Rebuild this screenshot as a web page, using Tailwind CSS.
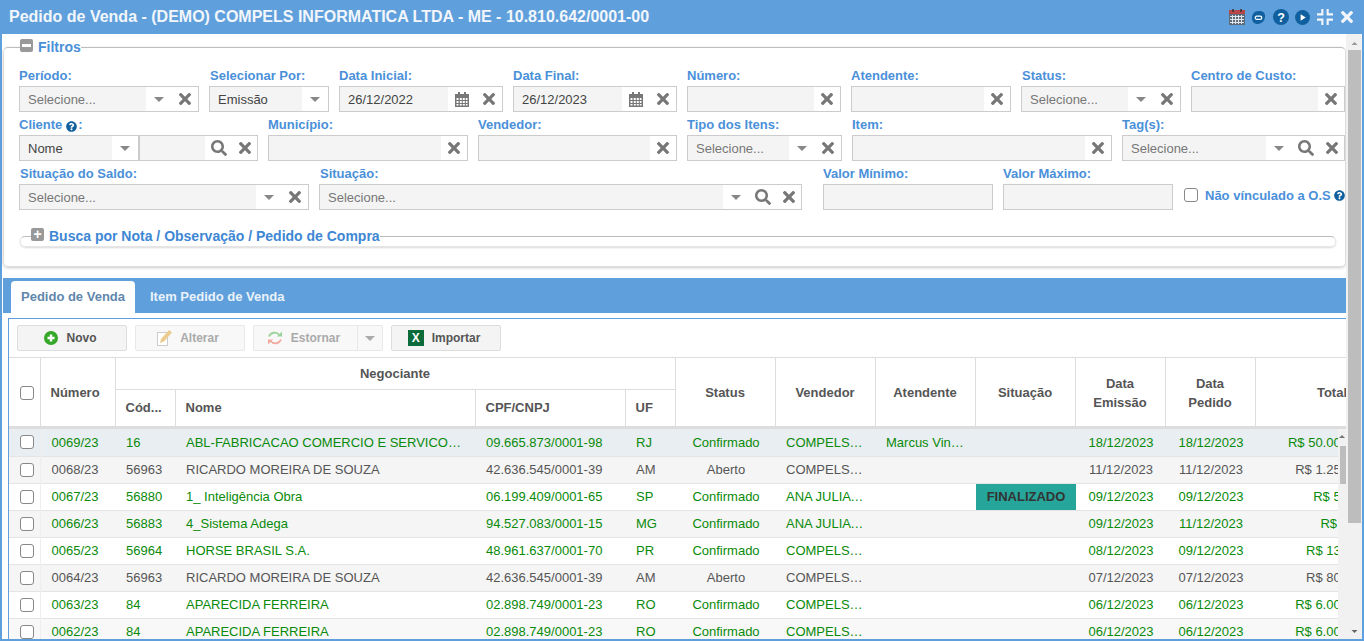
<!DOCTYPE html>
<html lang="pt-BR">
<head>
    <meta charset="UTF-8">
    <title>Pedido de Venda</title>
    <script src="https://cdn.jsdelivr.net/npm/@tailwindcss/browser@4"></script>
</head>
<body class="h-[641px] w-[1364px] overflow-hidden bg-white font-['Liberation_Sans',Arial,sans-serif] text-[13px] text-[#555]">
    <svg class="hidden">
        <symbol id="x" viewBox="0 0 352 512"><path fill="currentColor" d="M242.72 256l100.07-100.07c12.28-12.28 12.28-32.19 0-44.48l-22.24-22.24c-12.28-12.28-32.19-12.28-44.48 0L176 189.28 75.93 89.21c-12.28-12.28-32.19-12.28-44.48 0L9.21 111.45c-12.28 12.28-12.28 32.19 0 44.48L109.28 256 9.21 356.07c-12.28 12.28-12.28 32.19 0 44.48l22.24 22.24c12.28 12.28 32.2 12.28 44.48 0L176 322.72l100.07 100.07c12.28 12.28 32.2 12.28 44.48 0l22.24-22.24c12.28-12.28 12.28-32.19 0-44.48L242.72 256z"/></symbol>
        <symbol id="lupa" viewBox="0 0 512 512"><path fill="currentColor" d="M505 442.7L405.3 343c-4.5-4.5-10.6-7-17-7H372c27.6-35.3 44-79.7 44-128C416 93.1 322.9 0 208 0S0 93.1 0 208s93.1 208 208 208c48.3 0 92.7-16.4 128-44v16.3c0 6.4 2.5 12.5 7 17l99.7 99.7c9.4 9.4 24.6 9.4 33.9 0l28.3-28.3c9.4-9.4 9.4-24.6.1-34zM208 336c-70.7 0-128-57.2-128-128 0-70.7 57.2-128 128-128 70.7 0 128 57.2 128 128 0 70.7-57.2 128-128 128z"/></symbol>
        <symbol id="seta" viewBox="0 0 10 5"><path fill="currentColor" d="M0 0h10L5 5z"/></symbol>
        <symbol id="cal" viewBox="0 0 14 15"><path fill="currentColor" d="M3 0h2v2h4V0h2v2h3v13H0V2h3zM1.500 6v2h2V6zm3.300 0v2h2V6zm3 0v2h2V6zm3 0v2h1.700V6zM1.500 9v2h2V9zm3.300 0v2h2V9zm3 0v2h2V9zm3 0v2h1.700V9zM1.500 12v1.500h2V12zm3.300 0v1.500h2V12zm3 0v1.500h2V12zm3 0v1.500h1.700V12z"/></symbol>
        <symbol id="ajuda" viewBox="0 0 512 512"><path fill="currentColor" d="M504 256c0 136.997-111.043 248-248 248S8 392.997 8 256C8 119.083 119.043 8 256 8s248 111.083 248 248zM262.655 90c-54.497 0-89.255 22.957-116.549 63.758-3.536 5.286-2.353 12.415 2.715 16.258l34.699 26.31c5.205 3.947 12.621 3.008 16.665-2.122 17.864-22.658 30.113-35.797 57.303-35.797 20.429 0 45.698 13.148 45.698 32.958 0 14.976-12.363 22.667-32.534 33.976C247.128 238.528 216 254.941 216 296v4c0 6.627 5.373 12 12 12h56c6.627 0 12-5.373 12-12v-1.333c0-28.462 83.186-29.647 83.186-106.667 0-58.002-60.165-102-116.531-102zM256 338c-25.365 0-46 20.635-46 46 0 25.364 20.635 46 46 46s46-20.636 46-46c0-25.365-20.635-46-46-46z"/></symbol>
    </svg>

    <div class="flex h-full flex-col border-x-2 border-b-2 border-[#5fa0dc]">
        <!-- Title bar -->
        <div class="-mx-[2px] flex h-[34px] shrink-0 items-center justify-between bg-[#5fa0dc] pl-[9px] pr-[11px]">
            <h1 class="text-[16px] font-bold text-[#f2f6fb]">Pedido de Venda - (DEMO) COMPELS INFORMATICA LTDA - ME - 10.810.642/0001-00</h1>
            <div class="flex items-center">
                <svg class="h-[16px] w-[16px]" viewBox="0 0 16 16"><rect y="1" width="16" height="15" fill="#5c6b7a"/><rect y="1" width="16" height="4" fill="#b9474a"/><path stroke="#dfe5ea" stroke-width="1" d="M1 7.500h14M1 10.500h14M1 13.500h14M3.500 6v9M6.500 6v9M9.500 6v9M12.500 6v9"/><path stroke="#333" stroke-width="1.500" d="M4 0v3M12 0v3"/></svg>
                <svg class="ml-[6px] h-[15px] w-[15px]" viewBox="0 0 16 16"><path fill="#10609f" d="M8 1c5 0 7 2 7 5.500C15 11 12 15 7 15c-4 0-6-3-6-6.500C1 4 4 1 8 1z"/><rect x="4.500" y="6.500" width="7" height="3.500" rx="1.700" fill="none" stroke="#fff" stroke-width="1.300"/></svg>
                <svg class="ml-[7px] h-[16px] w-[16px] text-[#10609f]" viewBox="0 0 16 16"><circle cx="8" cy="8" r="8" fill="currentColor"/><text x="8" y="12.500" text-anchor="middle" fill="#fff" font-size="12.500" font-weight="700" font-family="Liberation Sans">?</text></svg>
                <svg class="ml-[6px] h-[15px] w-[15px]" viewBox="0 0 16 16"><circle cx="8" cy="8" r="8" fill="#10609f"/><path fill="#fff" d="M6 4.500l5.500 3.500L6 11.500z"/></svg>
                <svg class="ml-[7px] h-[16px] w-[16px]" viewBox="0 0 15 15"><path fill="#f2f6fb" d="M4 0h2v6H0V4h4zM9 0h2v4h4v2H9zM0 9h6v6H4v-4H0zM9 9h6v2h-4v4H9z"/></svg>
                <svg class="ml-[8px] h-[18px] w-[12px] text-[#f2f6fb]"><use href="#x"/></svg>
            </div>
        </div>

        <div class="flex min-h-0 flex-1">
            <div class="flex w-[1344px] min-w-0 flex-col pl-px">
                <!-- Filters -->
                <fieldset class="mt-[5px] h-[228px] w-[1343px] shrink-0 rounded-[5px] border border-[#dcdcdc] border-t-[#bdbdbd] pl-[15px] pr-0 shadow-[0_1px_3px_rgba(0,0,0,0.2)]">
                    <legend class="ml-[1px] flex h-[16px] items-center pr-0 text-[14px] font-bold leading-none text-[#4a90d9]">
                        <span class="flex h-[13px] w-[13px] -translate-y-[2px] items-center justify-center rounded-[2px] bg-[#999]"><span class="h-[3px] w-[9px] bg-white"></span></span>
                        <span class="ml-[5px]">Filtros</span>
                    </legend>

                    <div class="mt-[8px] flex gap-[10px]">
                        <div class="w-[180px]">
                            <label class="flex h-[23px] items-end pb-[1px] text-[13px] font-bold text-[#4a90d9]">Período:</label>
                            <div class="flex h-[26px] border border-[#ccc]">
                                <div class="flex flex-1 items-center bg-[#f4f4f4] pl-2 pt-px text-[#777]">Selecione...</div>
                                <div class="flex w-[26px] items-center justify-center"><svg class="h-[5px] w-[10px] text-[#888]"><use href="#seta"/></svg></div>
                                <div class="flex w-[26px] items-center justify-center"><svg class="h-[18px] w-[12px] text-[#777]"><use href="#x"/></svg></div>
                            </div>
                        </div>
                        <div class="w-[120px]">
                            <label class="flex h-[23px] items-end pb-[1px] pl-px text-[13px] font-bold text-[#4a90d9]">Selecionar Por:</label>
                            <div class="flex h-[26px] border border-[#ccc]">
                                <div class="flex flex-1 items-center bg-[#f4f4f4] pl-2 pt-px text-[#444]">Emissão</div>
                                <div class="flex w-[26px] items-center justify-center"><svg class="h-[5px] w-[10px] text-[#888]"><use href="#seta"/></svg></div>
                            </div>
                        </div>
                        <div class="w-[164px]">
                            <label class="flex h-[23px] items-end pb-[1px] text-[13px] font-bold text-[#4a90d9]">Data Inicial:</label>
                            <div class="flex h-[26px] border border-[#ccc]">
                                <div class="flex flex-1 items-center bg-[#f4f4f4] pl-2 pt-px text-[#444]">26/12/2022</div>
                                <div class="flex w-[28px] items-center justify-center"><svg class="h-[15px] w-[14px] text-[#777]"><use href="#cal"/></svg></div>
                                <div class="flex w-[26px] items-center justify-center"><svg class="h-[18px] w-[12px] text-[#777]"><use href="#x"/></svg></div>
                            </div>
                        </div>
                        <div class="w-[164px]">
                            <label class="flex h-[23px] items-end pb-[1px] text-[13px] font-bold text-[#4a90d9]">Data Final:</label>
                            <div class="flex h-[26px] border border-[#ccc]">
                                <div class="flex flex-1 items-center bg-[#f4f4f4] pl-2 pt-px text-[#444]">26/12/2023</div>
                                <div class="flex w-[28px] items-center justify-center"><svg class="h-[15px] w-[14px] text-[#777]"><use href="#cal"/></svg></div>
                                <div class="flex w-[26px] items-center justify-center"><svg class="h-[18px] w-[12px] text-[#777]"><use href="#x"/></svg></div>
                            </div>
                        </div>
                        <div class="w-[154px]">
                            <label class="flex h-[23px] items-end pb-[1px] text-[13px] font-bold text-[#4a90d9]">Número:</label>
                            <div class="flex h-[26px] border border-[#ccc]">
                                <div class="flex-1 bg-[#f4f4f4]"></div>
                                <div class="flex w-[26px] items-center justify-center"><svg class="h-[18px] w-[12px] text-[#777]"><use href="#x"/></svg></div>
                            </div>
                        </div>
                        <div class="w-[160px]">
                            <label class="flex h-[23px] items-end pb-[1px] text-[13px] font-bold text-[#4a90d9]">Atendente:</label>
                            <div class="flex h-[26px] border border-[#ccc]">
                                <div class="flex-1 bg-[#f4f4f4]"></div>
                                <div class="flex w-[26px] items-center justify-center"><svg class="h-[18px] w-[12px] text-[#777]"><use href="#x"/></svg></div>
                            </div>
                        </div>
                        <div class="w-[160px]">
                            <label class="flex h-[23px] items-end pb-[1px] pl-px text-[13px] font-bold text-[#4a90d9]">Status:</label>
                            <div class="flex h-[26px] border border-[#ccc]">
                                <div class="flex flex-1 items-center bg-[#f4f4f4] pl-2 pt-px text-[#777]">Selecione...</div>
                                <div class="flex w-[26px] items-center justify-center"><svg class="h-[5px] w-[10px] text-[#888]"><use href="#seta"/></svg></div>
                                <div class="flex w-[26px] items-center justify-center"><svg class="h-[18px] w-[12px] text-[#777]"><use href="#x"/></svg></div>
                            </div>
                        </div>
                        <div class="w-[154px]">
                            <label class="flex h-[23px] items-end pb-[1px] text-[13px] font-bold text-[#4a90d9]">Centro de Custo:</label>
                            <div class="flex h-[26px] border border-[#ccc]">
                                <div class="flex-1 bg-[#f4f4f4]"></div>
                                <div class="flex w-[26px] items-center justify-center"><svg class="h-[18px] w-[12px] text-[#777]"><use href="#x"/></svg></div>
                            </div>
                        </div>
                    </div>

                    <div class="flex gap-[10px]">
                        <div class="w-[239px]">
                            <label class="flex h-[23px] items-end pb-[1px] text-[13px] font-bold text-[#4a90d9]">Cliente<svg class="mb-[2px] ml-[4px] mr-px h-[11px] w-[11px] text-[#10609f]"><use href="#ajuda"/></svg>:</label>
                            <div class="flex h-[26px] border border-[#ccc]">
                                <div class="flex w-[120px] items-center border-r-2 border-[#ccc] bg-[#f4f4f4] pl-2 text-[#444]"><span class="flex-1 pt-px">Nome</span><span class="flex h-full w-[26px] items-center justify-center bg-white"><svg class="h-[5px] w-[10px] text-[#888]"><use href="#seta"/></svg></span></div>
                                <div class="flex-1 bg-[#f4f4f4]"></div>
                                <div class="flex w-[27px] items-center justify-center"><svg class="h-[16px] w-[16px] text-[#777]"><use href="#lupa"/></svg></div>
                                <div class="flex w-[25px] items-center justify-center"><svg class="h-[18px] w-[12px] text-[#777]"><use href="#x"/></svg></div>
                            </div>
                        </div>
                        <div class="w-[200px]">
                            <label class="flex h-[23px] items-end pb-[1px] text-[13px] font-bold text-[#4a90d9]">Município:</label>
                            <div class="flex h-[26px] border border-[#ccc]">
                                <div class="flex-1 bg-[#f4f4f4]"></div>
                                <div class="flex w-[26px] items-center justify-center"><svg class="h-[18px] w-[12px] text-[#777]"><use href="#x"/></svg></div>
                            </div>
                        </div>
                        <div class="w-[199px]">
                            <label class="flex h-[23px] items-end pb-[1px] text-[13px] font-bold text-[#4a90d9]">Vendedor:</label>
                            <div class="flex h-[26px] border border-[#ccc]">
                                <div class="flex-1 bg-[#f4f4f4]"></div>
                                <div class="flex w-[26px] items-center justify-center"><svg class="h-[18px] w-[12px] text-[#777]"><use href="#x"/></svg></div>
                            </div>
                        </div>
                        <div class="w-[155px]">
                            <label class="flex h-[23px] items-end pb-[1px] text-[13px] font-bold text-[#4a90d9]">Tipo dos Itens:</label>
                            <div class="flex h-[26px] border border-[#ccc]">
                                <div class="flex flex-1 items-center bg-[#f4f4f4] pl-2 pt-px text-[#777]">Selecione...</div>
                                <div class="flex w-[26px] items-center justify-center"><svg class="h-[5px] w-[10px] text-[#888]"><use href="#seta"/></svg></div>
                                <div class="flex w-[26px] items-center justify-center"><svg class="h-[18px] w-[12px] text-[#777]"><use href="#x"/></svg></div>
                            </div>
                        </div>
                        <div class="w-[260px]">
                            <label class="flex h-[23px] items-end pb-[1px] text-[13px] font-bold text-[#4a90d9]">Item:</label>
                            <div class="flex h-[26px] border border-[#ccc]">
                                <div class="flex-1 bg-[#f4f4f4]"></div>
                                <div class="flex w-[26px] items-center justify-center"><svg class="h-[18px] w-[12px] text-[#777]"><use href="#x"/></svg></div>
                            </div>
                        </div>
                        <div class="w-[223px]">
                            <label class="flex h-[23px] items-end pb-[1px] text-[13px] font-bold text-[#4a90d9]">Tag(s):</label>
                            <div class="flex h-[26px] border border-[#ccc]">
                                <div class="flex flex-1 items-center bg-[#f4f4f4] pl-2 pt-px text-[#777]">Selecione...</div>
                                <div class="flex w-[26px] items-center justify-center"><svg class="h-[5px] w-[10px] text-[#888]"><use href="#seta"/></svg></div>
                                <div class="flex w-[27px] items-center justify-center"><svg class="h-[16px] w-[16px] text-[#777]"><use href="#lupa"/></svg></div>
                                <div class="flex w-[25px] items-center justify-center"><svg class="h-[18px] w-[12px] text-[#777]"><use href="#x"/></svg></div>
                            </div>
                        </div>
                    </div>

                    <div class="flex gap-[10px]">
                        <div class="w-[290px]">
                            <label class="flex h-[23px] items-end pb-[1px] pl-px text-[13px] font-bold text-[#4a90d9]">Situação do Saldo:</label>
                            <div class="flex h-[26px] border border-[#ccc]">
                                <div class="flex flex-1 items-center bg-[#f4f4f4] pl-2 pt-px text-[#777]">Selecione...</div>
                                <div class="flex w-[26px] items-center justify-center"><svg class="h-[5px] w-[10px] text-[#888]"><use href="#seta"/></svg></div>
                                <div class="flex w-[26px] items-center justify-center"><svg class="h-[18px] w-[12px] text-[#777]"><use href="#x"/></svg></div>
                            </div>
                        </div>
                        <div class="w-[483px]">
                            <label class="flex h-[23px] items-end pb-[1px] pl-px text-[13px] font-bold text-[#4a90d9]">Situação:</label>
                            <div class="flex h-[26px] border border-[#ccc]">
                                <div class="flex flex-1 items-center bg-[#f4f4f4] pl-2 pt-px text-[#777]">Selecione...</div>
                                <div class="flex w-[26px] items-center justify-center"><svg class="h-[5px] w-[10px] text-[#888]"><use href="#seta"/></svg></div>
                                <div class="flex w-[27px] items-center justify-center"><svg class="h-[16px] w-[16px] text-[#777]"><use href="#lupa"/></svg></div>
                                <div class="flex w-[25px] items-center justify-center"><svg class="h-[18px] w-[12px] text-[#777]"><use href="#x"/></svg></div>
                            </div>
                        </div>
                        <div class="ml-[11px] w-[170px]">
                            <label class="flex h-[23px] items-end pb-[1px] text-[13px] font-bold text-[#4a90d9]">Valor Mínimo:</label>
                            <div class="h-[26px] border border-[#ccc] bg-[#f4f4f4]"></div>
                        </div>
                        <div class="w-[170px]">
                            <label class="flex h-[23px] items-end pb-[1px] text-[13px] font-bold text-[#4a90d9]">Valor Máximo:</label>
                            <div class="h-[26px] border border-[#ccc] bg-[#f4f4f4]"></div>
                        </div>
                        <div class="ml-[1px] flex items-center self-end pb-[5px] text-[13px] font-bold text-[#4a90d9]">
                            <input type="checkbox" class="h-[14px] w-[14px] appearance-none rounded-[3px] border border-[#888] bg-white">
                            <span class="ml-[7px]">Não vínculado a O.S</span>
                            <svg class="ml-[3px] h-[11px] w-[11px] text-[#10609f]"><use href="#ajuda"/></svg>
                        </div>
                    </div>

                    <fieldset class="ml-px mt-[18px] h-[19px] w-[1316px] rounded-[5px] border border-[#e6e6e6] border-t-[#bdbdbd] pl-[10px] shadow-[0_1px_2px_rgba(0,0,0,0.15)]">
                        <legend class="flex h-[16px] items-center text-[14px] font-bold leading-none text-[#3d87d4]">
                            <span class="flex h-[13px] w-[13px] -translate-y-[2px] items-center justify-center rounded-[2px] bg-[#999] text-[14px] leading-none text-white">+</span>
                            <span class="ml-[5px]">Busca por Nota / Observação / Pedido de Compra</span>
                        </legend>
                    </fieldset>
                </fieldset>

                <!-- Tabs -->
                <div class="mt-[11px] flex h-[35px] w-[1343px] shrink-0 items-end bg-[#5fa0dc] pl-[8px] text-[13px] font-bold">
                    <div class="flex h-[32px] w-[124px] items-center justify-center rounded-t-[4px] bg-white text-[#5f87ad]">Pedido de Venda</div>
                    <div class="flex h-[32px] items-center pl-[15px] text-[#eaf2fa]">Item Pedido de Venda</div>
                </div>

                <!-- Grid panel -->
                <div class="ml-[5px] mt-[5px] flex min-h-0 w-[1338px] flex-1 flex-col overflow-hidden border-l border-t border-[#5fa0dc]">
                    <div class="flex h-[39px] shrink-0 items-start gap-[8px] border-b border-[#ddd] pl-[8px] pt-[6px] text-[12px] font-bold">
                        <div class="flex h-[26px] w-[110px] items-center justify-center rounded-[2px] border border-[#ddd] bg-[#f4f4f4] pr-[4px] text-[#555]">
                            <svg class="mr-[9px] h-[14px] w-[14px]" viewBox="0 0 14 14"><circle cx="7" cy="7" r="7" fill="#35a829"/><path fill="#fff" d="M5.800 3.500h2.400v2.300h2.300v2.400H8.200v2.300H5.800V8.200H3.500V5.800h2.300z"/></svg>
                            Novo
                        </div>
                        <div class="flex h-[26px] w-[110px] items-center justify-center rounded-[2px] border border-[#e8e8e8] bg-[#f8f8f8] pr-[5px] text-[#aaa]">
                            <svg class="mr-[8px] h-[16px] w-[16px]" viewBox="0 0 16 16"><rect x="1.500" y="2.500" width="10" height="13" fill="#fff" stroke="#ccc"/><path fill="#eccb8e" d="M13 0l3 2.500-8 9-4 1.500 1-4z"/></svg>
                            Alterar
                        </div>
                        <div class="flex h-[26px] w-[130px] items-center rounded-[2px] border border-[#e8e8e8] bg-[#f8f8f8] text-[#aaa]">
                            <span class="flex flex-1 items-center justify-center pr-[4px]">
                                <svg class="mr-[8px] h-[16px] w-[16px]" viewBox="0 0 16 16" fill="none" stroke-width="1.800"><path stroke="#9bd39b" d="M2 6.500C3.500 2.500 9 1 12.500 5"/><path fill="#9bd39b" d="M15 1.500v5h-5z"/><path stroke="#f2a9a0" d="M14 9.500C12.500 13.500 7 15 3.500 11"/><path fill="#f2a9a0" d="M1 14.500v-5h5z"/></svg>
                                Estornar
                            </span>
                            <span class="flex h-full w-[25px] items-center justify-center border-l border-[#e8e8e8]"><svg class="h-[5px] w-[10px] text-[#aaa]"><use href="#seta"/></svg></span>
                        </div>
                        <div class="flex h-[26px] w-[110px] items-center justify-center rounded-[2px] border border-[#ddd] bg-[#f4f4f4] pr-[4px] text-[#555]">
                            <span class="mr-[8px] flex h-[16px] w-[16px] items-center justify-center bg-[#0b6b3a] text-[12px] font-bold leading-none text-white">X</span>
                            Importar
                        </div>
                    </div>

                    <!-- Header -->
                    <div class="h-[71px] shrink-0 overflow-hidden">
                        <table class="w-[1346px] table-fixed border-collapse font-bold text-[#555]">
                            <colgroup><col class="w-[31px]"><col class="w-[75px]"><col class="w-[60px]"><col class="w-[300px]"><col class="w-[150px]"><col class="w-[50px]"><col class="w-[100px]"><col class="w-[100px]"><col class="w-[100px]"><col class="w-[100px]"><col class="w-[90px]"><col class="w-[90px]"><col class="w-[100px]"></colgroup>
                            <thead class="border-b-[3px] border-[#ddd]">
                                <tr class="h-[31px]">
                                    <th rowspan="2" class="border-r border-[#ddd]"><input type="checkbox" class="block h-[14px] w-[14px] translate-x-[11px] translate-y-px appearance-none rounded-[3px] border border-[#888] bg-white"></th>
                                    <th rowspan="2" class="border-r border-[#ddd] pl-[10px] pt-[2px] text-left">Número</th>
                                    <th colspan="4" class="border-b border-r border-[#ddd] pt-px text-center">Negociante</th>
                                    <th rowspan="2" class="border-r border-[#ddd] pt-[2px] text-center">Status</th>
                                    <th rowspan="2" class="border-r border-[#ddd] pt-[2px] text-center">Vendedor</th>
                                    <th rowspan="2" class="border-r border-[#ddd] pt-[2px] text-center">Atendente</th>
                                    <th rowspan="2" class="border-r border-[#ddd] pt-[2px] text-center">Situação</th>
                                    <th rowspan="2" class="border-r border-[#ddd] pt-[2px] text-center leading-[19px]">Data<br>Emissão</th>
                                    <th rowspan="2" class="border-r border-[#ddd] pt-[2px] text-center leading-[19px]">Data<br>Pedido</th>
                                    <th rowspan="2" class="pr-[8px] pt-[2px] text-right">Total</th>
                                </tr>
                                <tr class="h-[38px]">
                                    <th class="truncate border-r border-[#ddd] pl-[10px] text-left font-bold">Cód...</th>
                                    <th class="border-r border-[#ddd] pl-[10px] text-left">Nome</th>
                                    <th class="border-r border-[#ddd] pl-[10px] text-left">CPF/CNPJ</th>
                                    <th class="border-r border-[#ddd] pl-[10px] text-left">UF</th>
                                </tr>
                            </thead>
                        </table>
                    </div>

                    <!-- Rows -->
                    <div class="relative min-h-0 flex-1 overflow-hidden">
                        <table class="w-[1367px] table-fixed border-collapse">
                            <colgroup><col class="w-[31px]"><col class="w-[76px]"><col class="w-[60px]"><col class="w-[300px]"><col class="w-[150px]"><col class="w-[50px]"><col class="w-[100px]"><col class="w-[100px]"><col class="w-[100px]"><col class="w-[100px]"><col class="w-[90px]"><col class="w-[90px]"><col class="w-[120px]"></colgroup>
                            <tbody>
                                <tr class="h-[27px] border-b border-[#e4e4e4] bg-[#e9eef2] text-[#0a8a0a]">
                                    <td class="border-r border-[#eee] pl-[11px]"><input type="checkbox" class="block h-[14px] w-[14px] appearance-none rounded-[3px] border border-[#888] bg-white"></td>
                                    <td class="pl-[11px]">0069/23</td><td class="pl-[10px]">16</td><td class="truncate px-[10px]">ABL-FABRICACAO COMERCIO E SERVICOS LTDA</td><td class="pl-[10px]">09.665.873/0001-98</td><td class="pl-[10px]">RJ</td><td class="text-center">Confirmado</td><td class="truncate px-[10px]">COMPELS INFORMATICA</td><td class="truncate px-[10px]">Marcus Vinicius Silva</td><td></td><td class="text-center">18/12/2023</td><td class="text-center">18/12/2023</td><td class="pr-[10px] text-right">R$ 50.000,00</td>
                                </tr>
                                <tr class="h-[27px] border-b border-[#e4e4e4] bg-[#f5f5f5] text-[#555]">
                                    <td class="border-r border-[#eee] pl-[11px]"><input type="checkbox" class="block h-[14px] w-[14px] appearance-none rounded-[3px] border border-[#888] bg-white"></td>
                                    <td class="pl-[11px]">0068/23</td><td class="pl-[10px]">56963</td><td class="truncate px-[10px]">RICARDO MOREIRA DE SOUZA</td><td class="pl-[10px]">42.636.545/0001-39</td><td class="pl-[10px]">AM</td><td class="text-center">Aberto</td><td class="truncate px-[10px]">COMPELS INFORMATICA</td><td></td><td></td><td class="text-center">11/12/2023</td><td class="text-center">11/12/2023</td><td class="pr-[10px] text-right">R$ 1.250,00</td>
                                </tr>
                                <tr class="h-[27px] border-b border-[#e4e4e4] bg-white text-[#0a8a0a]">
                                    <td class="border-r border-[#eee] pl-[11px]"><input type="checkbox" class="block h-[14px] w-[14px] appearance-none rounded-[3px] border border-[#888] bg-white"></td>
                                    <td class="pl-[11px]">0067/23</td><td class="pl-[10px]">56880</td><td class="truncate px-[10px]">1_ Inteligência Obra</td><td class="pl-[10px]">06.199.409/0001-65</td><td class="pl-[10px]">SP</td><td class="text-center">Confirmado</td><td class="truncate px-[10px]">ANA JULIA FERREIRA</td><td></td><td class="bg-[#26a69a] text-center font-bold text-[#333]">FINALIZADO</td><td class="text-center">09/12/2023</td><td class="text-center">09/12/2023</td><td class="pr-[10px] text-right">R$ 50,00</td>
                                </tr>
                                <tr class="h-[27px] border-b border-[#e4e4e4] bg-[#f5f5f5] text-[#0a8a0a]">
                                    <td class="border-r border-[#eee] pl-[11px]"><input type="checkbox" class="block h-[14px] w-[14px] appearance-none rounded-[3px] border border-[#888] bg-white"></td>
                                    <td class="pl-[11px]">0066/23</td><td class="pl-[10px]">56883</td><td class="truncate px-[10px]">4_Sistema Adega</td><td class="pl-[10px]">94.527.083/0001-15</td><td class="pl-[10px]">MG</td><td class="text-center">Confirmado</td><td class="truncate px-[10px]">ANA JULIA FERREIRA</td><td></td><td></td><td class="text-center">09/12/2023</td><td class="text-center">11/12/2023</td><td class="pr-[10px] text-right">R$ 5,00</td>
                                </tr>
                                <tr class="h-[27px] border-b border-[#e4e4e4] bg-white text-[#0a8a0a]">
                                    <td class="border-r border-[#eee] pl-[11px]"><input type="checkbox" class="block h-[14px] w-[14px] appearance-none rounded-[3px] border border-[#888] bg-white"></td>
                                    <td class="pl-[11px]">0065/23</td><td class="pl-[10px]">56964</td><td class="truncate px-[10px]">HORSE BRASIL S.A.</td><td class="pl-[10px]">48.961.637/0001-70</td><td class="pl-[10px]">PR</td><td class="text-center">Confirmado</td><td class="truncate px-[10px]">COMPELS INFORMATICA</td><td></td><td></td><td class="text-center">08/12/2023</td><td class="text-center">09/12/2023</td><td class="pr-[10px] text-right">R$ 130,00</td>
                                </tr>
                                <tr class="h-[27px] border-b border-[#e4e4e4] bg-[#f5f5f5] text-[#555]">
                                    <td class="border-r border-[#eee] pl-[11px]"><input type="checkbox" class="block h-[14px] w-[14px] appearance-none rounded-[3px] border border-[#888] bg-white"></td>
                                    <td class="pl-[11px]">0064/23</td><td class="pl-[10px]">56963</td><td class="truncate px-[10px]">RICARDO MOREIRA DE SOUZA</td><td class="pl-[10px]">42.636.545/0001-39</td><td class="pl-[10px]">AM</td><td class="text-center">Aberto</td><td class="truncate px-[10px]">COMPELS INFORMATICA</td><td></td><td></td><td class="text-center">07/12/2023</td><td class="text-center">07/12/2023</td><td class="pr-[10px] text-right">R$ 800,00</td>
                                </tr>
                                <tr class="h-[27px] border-b border-[#e4e4e4] bg-white text-[#0a8a0a]">
                                    <td class="border-r border-[#eee] pl-[11px]"><input type="checkbox" class="block h-[14px] w-[14px] appearance-none rounded-[3px] border border-[#888] bg-white"></td>
                                    <td class="pl-[11px]">0063/23</td><td class="pl-[10px]">84</td><td class="truncate px-[10px]">APARECIDA FERREIRA</td><td class="pl-[10px]">02.898.749/0001-23</td><td class="pl-[10px]">RO</td><td class="text-center">Confirmado</td><td class="truncate px-[10px]">COMPELS INFORMATICA</td><td></td><td></td><td class="text-center">06/12/2023</td><td class="text-center">06/12/2023</td><td class="pr-[10px] text-right">R$ 6.000,00</td>
                                </tr>
                                <tr class="h-[27px] border-b border-[#e4e4e4] bg-[#f8f8f8] text-[#0a8a0a]">
                                    <td class="border-r border-[#eee] pl-[11px]"><input type="checkbox" class="block h-[14px] w-[14px] appearance-none rounded-[3px] border border-[#888] bg-white"></td>
                                    <td class="pl-[11px]">0062/23</td><td class="pl-[10px]">84</td><td class="truncate px-[10px]">APARECIDA FERREIRA</td><td class="pl-[10px]">02.898.749/0001-23</td><td class="pl-[10px]">RO</td><td class="text-center">Confirmado</td><td class="truncate px-[10px]">COMPELS INFORMATICA</td><td></td><td></td><td class="text-center">06/12/2023</td><td class="text-center">06/12/2023</td><td class="pr-[10px] text-right">R$ 6.000,00</td>
                                </tr>
                            </tbody>
                        </table>
                        <!-- grid scrollbar -->
                        <div class="absolute inset-y-0 right-0 flex w-[8px] flex-col bg-[#f1f1f1]">
                            <svg class="mx-auto mt-[6px] h-[3px] w-[6px] rotate-180 text-[#777]"><use href="#seta"/></svg>
                            <div class="mt-[8px] h-[38px] w-[6px] self-end bg-[#bdbdbd]"></div>
                        </div>
                    </div>
                </div>
            </div>

            <!-- Page scrollbar -->
            <div class="relative flex w-[16px] shrink-0 flex-col bg-[#f1f1f1] pl-[2px] pr-[1px]">
                <svg class="mx-auto mt-[8px] h-[3px] w-[7px] rotate-180 text-[#999]"><use href="#seta"/></svg>
                <div class="mt-[5px] h-[473px] bg-[#bdbdbd]"></div>
                <svg class="mx-auto mb-[6px] mt-auto h-[3px] w-[7px] text-[#666]"><use href="#seta"/></svg>
            </div>
        </div>
    </div>
</body>
</html>
